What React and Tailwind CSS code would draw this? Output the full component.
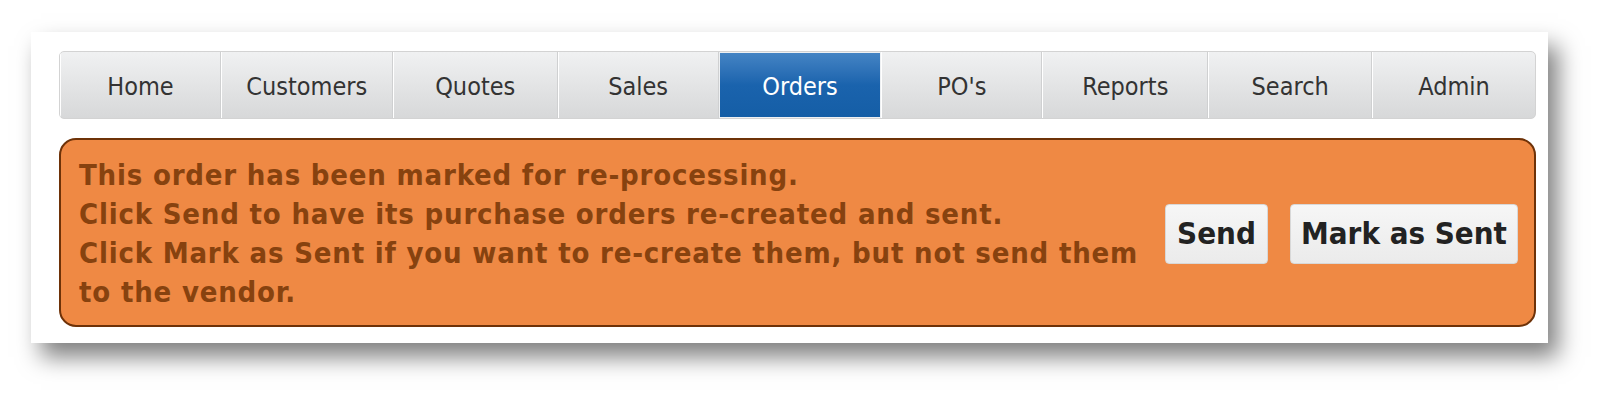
import React from 'react';

const tabs = [
  { label: 'Home', w: 'w-[161px]' },
  { label: 'Customers', w: 'w-[172px]' },
  { label: 'Quotes', w: 'w-[165px]' },
  { label: 'Sales', w: 'w-[161px]' },
  { label: 'Orders', w: 'w-[163px]', active: true },
  { label: "PO's", w: 'w-[161px]' },
  { label: 'Reports', w: 'w-[166px]' },
  { label: 'Search', w: 'w-[164px]' },
  { label: 'Admin', w: 'w-[163px]' },
];

const font = { fontFamily: '"DejaVu Sans Condensed", "DejaVu Sans", "Noto Sans", sans-serif' };

export default function App() {
  return (
    <div className="w-[1613px] h-[409px] bg-white pt-[32px] pl-[31px]" style={font}>
      {/* card */}
      <div className="w-[1517px] bg-white pt-[19px] pb-[16px] pl-[28px] pr-[12px] shadow-[10px_14px_22px_rgba(0,0,0,0.5)] font-stretch-condensed">
        {/* nav */}
        <div className="flex h-[68px] rounded-[5px] border border-[#d3d3d3] bg-gradient-to-b from-[#f0f1f2] to-[#d7d8d9] overflow-hidden">
          {tabs.map((t, i) => (
            <div
              key={t.label}
              className={
                t.active
                  ? `${t.w} flex items-center justify-center pt-[4px] text-[25px] text-white bg-gradient-to-b from-[#4484c4] via-[#1a63ad] to-[#155ea6] border border-[#eef0f2]`
                  : `${t.w} flex items-center justify-center pt-[4px] text-[25px] text-[#333] border-l border-white ${i < tabs.length - 1 ? 'border-r border-r-[#cfd0d1]' : ''}`
              }
            >
              {t.label}
            </div>
          ))}
        </div>

        {/* alert */}
        <div className="mt-[19px] h-[189px] flex items-center rounded-[17px] border-2 border-[#6e3208] bg-[#ef8944] pl-[18px] pr-[16px]">
          <p className="flex-1 pt-[2px] text-[29px] leading-[39px] tracking-[0.8px] font-bold text-[#87420f]">
            This order has been marked for re-processing.<br />
            Click Send to have its purchase orders re-created and sent.<br />
            Click Mark as Sent if you want to re-create them, but not send them<br />
            to the vendor.
          </p>
          <div className="flex gap-[22px] pt-[2px]">
            <button className="w-[103px] h-[60px] rounded-[4px] border border-[#d8d8d8] bg-gradient-to-b from-[#f6f6f6] to-[#ebebeb] text-[31px] font-bold text-[#222]">
              Send
            </button>
            <button className="w-[228px] h-[60px] rounded-[4px] border border-[#d8d8d8] bg-gradient-to-b from-[#f6f6f6] to-[#ebebeb] text-[31px] font-bold text-[#222]">
              Mark as Sent
            </button>
          </div>
        </div>
      </div>
    </div>
  );
}
